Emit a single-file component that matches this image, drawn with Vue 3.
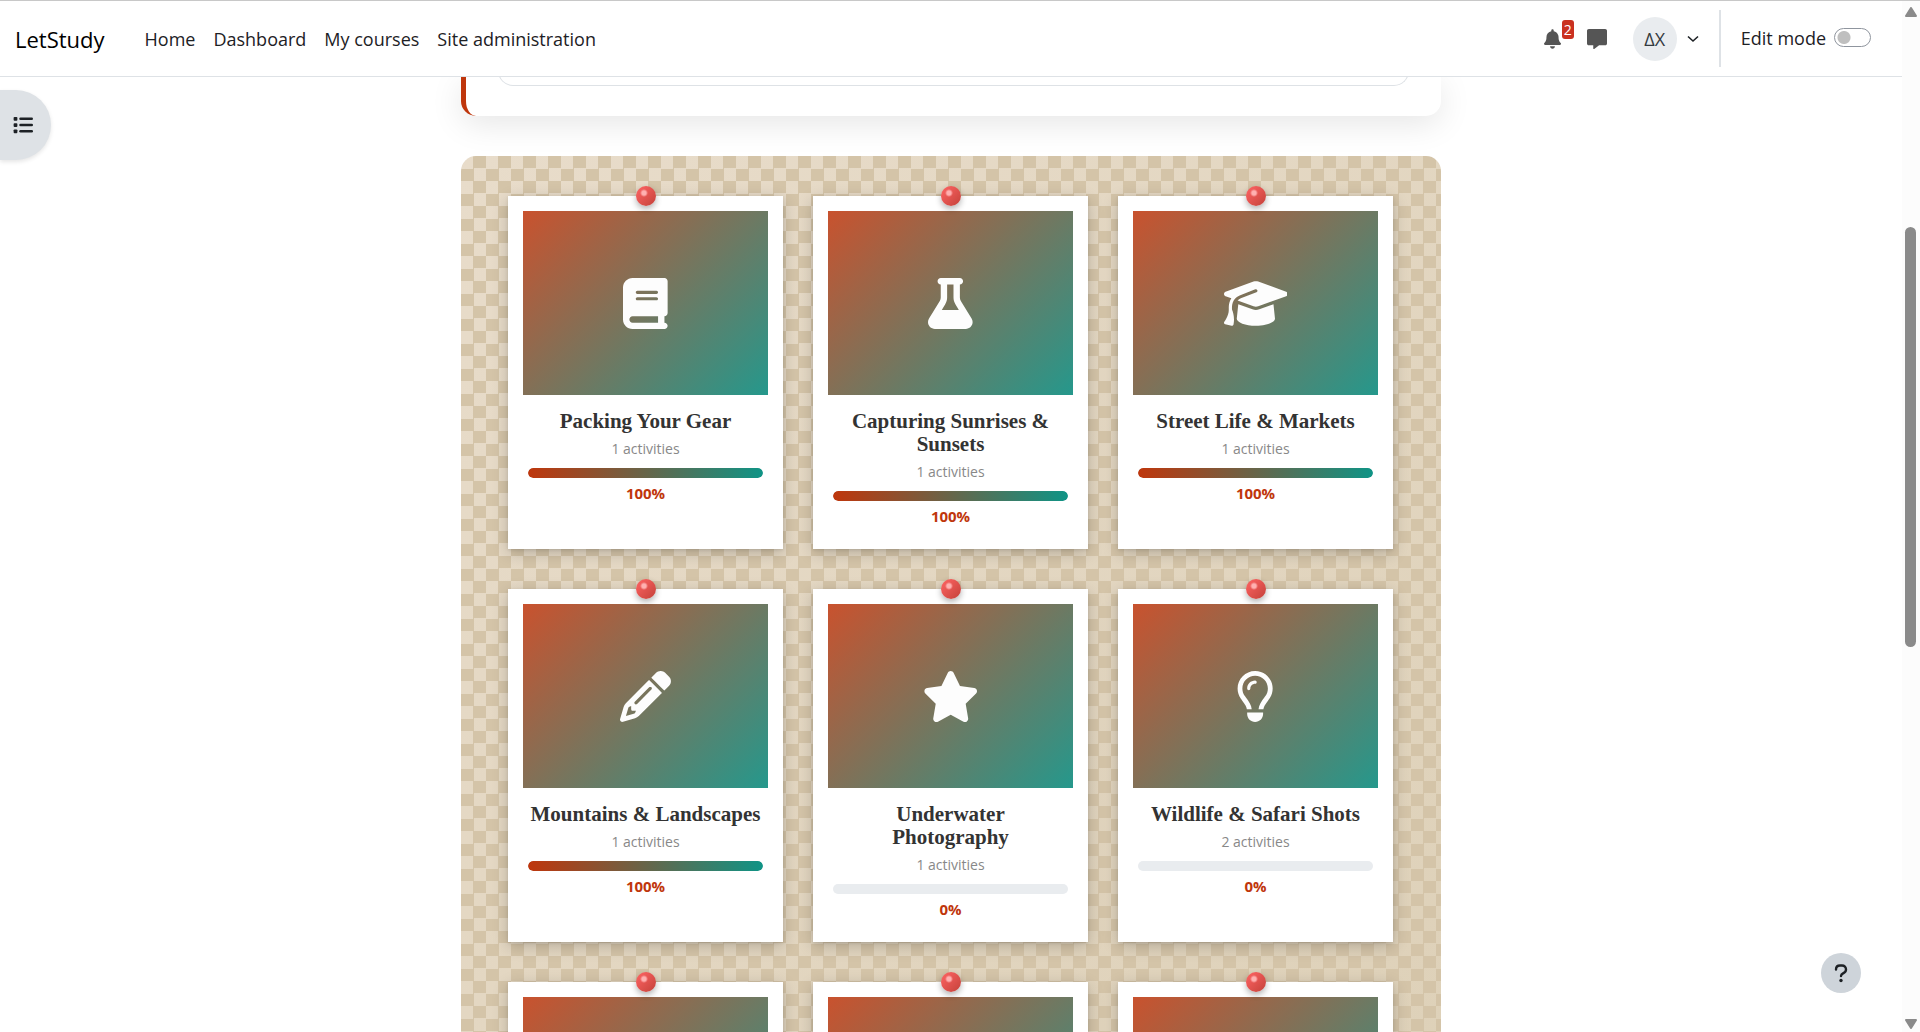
<script setup>
import { ref } from 'vue'

const editMode = ref(false)

const navLinks = ['Home', 'Dashboard', 'My courses', 'Site administration']

const icons = {
  book: {
    w: 448,
    d: 'M96 0C43 0 0 43 0 96L0 416c0 53 43 96 96 96l288 0 32 0c17.7 0 32-14.3 32-32s-14.3-32-32-32l0-64c17.7 0 32-14.3 32-32l0-320c0-17.7-14.3-32-32-32L384 0 96 0zm0 384l256 0 0 64L96 448c-17.7 0-32-14.3-32-32s14.3-32 32-32zm32-240c0-8.8 7.2-16 16-16l192 0c8.8 0 16 7.2 16 16s-7.2 16-16 16l-192 0c-8.8 0-16-7.2-16-16zm16 48l192 0c8.8 0 16 7.2 16 16s-7.2 16-16 16l-192 0c-8.8 0-16-7.2-16-16s7.2-16 16-16z',
  },
  flask: {
    w: 448,
    d: 'M288 0L160 0 128 0C110.3 0 96 14.3 96 32s14.3 32 32 32l0 132.8c0 11.8-3.3 23.5-9.5 33.5L10.3 406.2C3.6 417.2 0 429.7 0 442.6C0 480.9 31.1 512 69.4 512l309.2 0c38.3 0 69.4-31.1 69.4-69.4c0-12.8-3.6-25.4-10.3-36.4L329.5 230.4c-6.2-10.1-9.5-21.7-9.5-33.5L320 64c17.7 0 32-14.3 32-32s-14.3-32-32-32L288 0zM192 196.8L192 64l64 0 0 132.8c0 23.7 6.6 46.9 19 67.1L309.5 320l-171 0L173 263.9c12.4-20.2 19-43.4 19-67.1z',
  },
  cap: {
    w: 640,
    d: 'M320 32c-8.1 0-16.1 1.4-23.7 4.1L15.8 137.4C6.3 140.9 0 149.9 0 160s6.3 19.1 15.8 22.6l57.9 20.9C57.3 229.3 48 259.8 48 291.9l0 28.1c0 28.4-10.8 57.7-22.3 80.8c-6.5 13-13.9 25.8-22.5 37.6C0 442.7-.9 448.3 .9 453.4s6 8.9 11.2 10.2l64 16c4.2 1.1 8.7 .3 12.4-2s6.3-6.1 7.1-10.4c8.6-42.8 4.3-81.2-2.1-108.7C90.3 344.3 86 329.8 80 316.5l0-24.6c0-30.2 10.2-58.7 27.9-81.5c12.9-15.5 29.6-28 49.2-35.7l157-61.7c8.2-3.2 17.5 .8 20.7 9s-.8 17.5-9 20.7l-157 61.7c-12.4 4.9-23.3 12.4-32.2 21.6l159.6 57.6c7.6 2.7 15.6 4.1 23.7 4.1s16.1-1.4 23.7-4.1L624.2 182.6c9.5-3.4 15.8-12.5 15.8-22.6s-6.3-19.1-15.8-22.6L343.7 36.1C336.1 33.4 328.1 32 320 32zM128 408c0 35.3 86 72 192 72s192-36.7 192-72L496.7 262.6 354.5 314c-11.1 4-22.8 6-34.5 6s-23.5-2-34.5-6L143.3 262.6 128 408z',
  },
  pencil: {
    w: 512,
    d: 'M410.3 231l11.3-11.3-33.9-33.9-62.1-62.1L291.7 89.8l-11.3 11.3-22.6 22.6L58.6 322.9c-10.4 10.4-18 23.3-22.2 37.4L1 480.7c-2.5 8.4-.2 17.5 6.1 23.7s15.3 8.5 23.7 6.1l120.3-35.4c14.1-4.2 27-11.8 37.4-22.2L387.7 253.7 410.3 231zM160 399.4l-9.1 22.7c-4 3.1-8.5 5.4-13.3 6.9L59.4 452l23-78.1c1.4-4.9 3.8-9.4 6.9-13.3l22.7-9.1 0 32c0 8.8 7.2 16 16 16l32 0zM362.7 18.7L348.3 33.2 325.7 55.8 314.3 67.1l33.9 33.9 62.1 62.1 33.9 33.9 11.3-11.3 22.6-22.6 14.5-14.5c25-25 25-65.5 0-90.5L453.3 18.7c-25-25-65.5-25-90.5 0zm-47.4 168l-144 144c-6.2 6.2-16.4 6.2-22.6 0s-6.2-16.4 0-22.6l144-144c6.2-6.2 16.4-6.2 22.6 0s6.2 16.4 0 22.6z',
  },
  star: {
    w: 576,
    d: 'M316.9 18C311.6 7 300.4 0 288.1 0s-23.4 7-28.8 18L195 150.3 51.4 171.5c-12 1.8-22 10.2-25.7 21.7s-.7 24.2 7.9 32.7L137.8 329 113.2 474.7c-2 12 3 24.2 12.9 31.3s23 8 33.8 2.3l128.3-68.5 128.3 68.5c10.8 5.7 23.9 4.9 33.8-2.3s14.9-19.3 12.9-31.3L438.5 329 542.7 225.9c8.6-8.5 11.7-21.2 7.9-32.7s-13.7-19.9-25.7-21.7L381.2 150.3 316.9 18z',
  },
  bulb: {
    w: 384,
    d: 'M297.2 248.9C311.6 228.3 320 203.2 320 176c0-70.7-57.3-128-128-128S64 105.3 64 176c0 27.2 8.4 52.3 22.8 72.9c3.7 5.3 8.1 11.3 12.8 17.7c12.9 17.7 28.3 38.9 39.8 59.8c10.4 19 15.7 38.8 18.3 57.5L109 384c-2.2-12-5.9-23.7-11.8-34.5c-9.9-18-22.2-34.9-34.5-51.8c-5.2-7.1-10.4-14.2-15.4-21.4C27.6 247.9 16 213.3 16 176C16 78.8 94.8 0 192 0s176 78.8 176 176c0 37.3-11.6 71.9-31.4 100.3c-5 7.2-10.2 14.3-15.4 21.4c-12.3 16.8-24.6 33.7-34.5 51.8c-5.9 10.8-9.6 22.5-11.8 34.5l-48.6 0c2.6-18.7 7.9-38.6 18.3-57.5c11.5-20.9 26.9-42.1 39.8-59.8c4.7-6.4 9-12.4 12.7-17.7zM192 128c-26.5 0-48 21.5-48 48c0 8.8-7.2 16-16 16s-16-7.2-16-16c0-44.2 35.8-80 80-80c8.8 0 16 7.2 16 16s-7.2 16-16 16zm0 384c-44.2 0-80-35.8-80-80l0-16 160 0 0 16c0 44.2-35.8 80-80 80z',
  },
}

const cards = [
  { title: 'Packing Your Gear', count: 1, percent: 100, icon: icons.book },
  { title: 'Capturing Sunrises & Sunsets', count: 1, percent: 100, icon: icons.flask },
  { title: 'Street Life & Markets', count: 1, percent: 100, icon: icons.cap },
  { title: 'Mountains & Landscapes', count: 1, percent: 100, icon: icons.pencil },
  { title: 'Underwater\nPhotography', count: 1, percent: 0, icon: icons.star },
  { title: 'Wildlife & Safari Shots', count: 2, percent: 0, icon: icons.bulb },
  {},
  {},
  {},
]
</script>

<template>
  <div class="window">
    <div class="page">
      <header class="navbar">
        <a class="brand" href="#">LetStudy</a>
        <nav class="nav">
          <a v-for="link in navLinks" :key="link" href="#">{{ link }}</a>
        </nav>
        <div class="tools">
          <button class="icon-btn bell" type="button" aria-label="Notifications">
            <svg width="17" height="20" viewBox="0 0 448 512" fill="currentColor">
              <path d="M224 0c-17.7 0-32 14.3-32 32l0 19.2C119 66 64 130.6 64 208l0 18.8c0 47-17.3 92.4-48.5 127.6l-7.4 8.3c-8.4 9.4-10.4 22.9-5.3 34.4S19.4 416 32 416l384 0c12.6 0 24-7.4 29.2-18.9s3.1-25-5.3-34.4l-7.4-8.3C401.3 319.2 384 273.9 384 226.8l0-18.8c0-77.4-55-142-128-156.8L256 32c0-17.7-14.3-32-32-32zm45.3 493.3c12-12 18.7-28.3 18.7-45.3l-64 0-64 0c0 17 6.7 33.3 18.7 45.3s28.3 18.7 45.3 18.7s33.3-6.7 45.3-18.7z" />
            </svg>
            <span class="badge">2</span>
          </button>
          <button class="icon-btn" type="button" aria-label="Messages">
            <svg width="20" height="20" viewBox="0 0 512 512" fill="currentColor">
              <path d="M48 0C20 0 0 20 0 48L0 368c0 28 20 48 48 48l112 0 0 80c0 6.1 3.4 11.6 8.8 14.3s11.9 2.1 16.8-1.5L309.3 416 464 416c28 0 48-20 48-48l0-320c0-28-20-48-48-48L48 0z" />
            </svg>
          </button>
          <button class="user" type="button" aria-label="User menu">
            <span class="avatar">ΔX</span>
            <svg width="12" height="8" viewBox="0 0 12 8" fill="none" stroke="#1d2125" stroke-width="1.600">
              <path d="M1 1.500l5 4.500 5-4.500" />
            </svg>
          </button>
          <div class="edit">
            <label for="edit-mode">Edit mode</label>
            <input id="edit-mode" v-model="editMode" type="checkbox" />
          </div>
        </div>
      </header>

      <button class="drawer" type="button" aria-label="Open course index">
        <svg width="20" height="20" viewBox="0 0 512 512" fill="currentColor">
          <rect x="16" y="48" width="96" height="96" rx="24" />
          <rect x="16" y="208" width="96" height="96" rx="24" />
          <rect x="16" y="368" width="96" height="96" rx="24" />
          <rect x="160" y="64" width="352" height="64" rx="32" />
          <rect x="160" y="224" width="352" height="64" rx="32" />
          <rect x="160" y="384" width="352" height="64" rx="32" />
        </svg>
      </button>

      <main class="content">
        <section class="intro">
          <div class="intro-box"></div>
        </section>
        <section class="board">
          <article v-for="(card, i) in cards" :key="i" class="card">
            <span class="pin"></span>
            <div class="photo">
              <svg
                v-if="card.icon"
                :viewBox="`0 0 ${card.icon.w} 512`"
                fill="currentColor"
              >
                <path :d="card.icon.d" />
              </svg>
            </div>
            <div v-if="card.title" class="caption">
              <h3>{{ card.title }}</h3>
              <p class="count">{{ card.count }} activities</p>
              <div class="track">
                <div class="fill" :style="{ width: card.percent + '%' }"></div>
              </div>
              <p class="percent">{{ card.percent }}%</p>
            </div>
          </article>
        </section>
      </main>

      <button class="help" type="button" aria-label="Help">
        <svg width="14" height="20" viewBox="0 0 14 20" fill="none" stroke="currentColor" stroke-width="2.400" stroke-linecap="round" stroke-linejoin="round">
          <path d="M2 6.500C2 3.800 3.700 2.500 6 2.500H8C10.400 2.500 12 4.200 12 6.400C12 8.200 11 9.300 9.500 10.100C8 10.900 7 11.400 7 13" />
          <circle cx="7" cy="17.500" r="1.700" fill="currentColor" stroke="none" />
        </svg>
      </button>
    </div>

    <div class="scrollbar" aria-hidden="true">
      <svg width="12" height="10" viewBox="0 0 12 10"><path d="M6 1L11 9H1z" /></svg>
      <div class="rail"><div class="thumb"></div></div>
      <svg width="12" height="10" viewBox="0 0 12 10"><path d="M6 9L11 1H1z" /></svg>
    </div>
  </div>
</template>

<style>
body {
  margin: 0;
  overflow: hidden;
}
</style>

<style scoped>
.window {
  display: flex;
  height: 100vh;
  overflow: hidden;
  box-sizing: border-box;
  border-top: 1px solid #c8c8c8;
  background: #fff;
  color: #1d2125;
  font-family: "Segoe UI", "Open Sans", "Noto Sans", sans-serif;
  font-size: 18px;
}

.page {
  position: relative;
  flex: 1;
  min-width: 0;
  overflow: hidden;
}

button {
  padding: 0;
  border: 0;
  background: none;
  color: inherit;
  font: inherit;
  cursor: pointer;
}

svg {
  display: block;
}

.navbar {
  position: relative;
  z-index: 2;
  display: flex;
  align-items: center;
  height: 75px;
  padding: 0 31px 0 15px;
  border-bottom: 1px solid #dee2e6;
  background: #fff;
}

.brand {
  color: #000;
  font-size: 22px;
  text-decoration: none;
}

.nav {
  display: flex;
  gap: 18px;
  margin-left: 40px;
}

.nav a {
  color: #1d2125;
  text-decoration: none;
}

.tools {
  display: flex;
  align-items: center;
  margin-left: auto;
}

.icon-btn {
  position: relative;
  color: #555;
  margin-right: 26px;
}

.badge {
  position: absolute;
  top: -9px;
  left: 18px;
  width: 12px;
  border-radius: 3px;
  background: #ca3120;
  color: #fff;
  font-size: 14px;
  line-height: 19px;
  text-align: center;
}

.user {
  display: flex;
  align-items: center;
  gap: 10px;
  margin-right: 20px;
}

.avatar {
  width: 44px;
  border-radius: 50%;
  background: #e9ecef;
  color: #343a40;
  line-height: 44px;
  text-align: center;
}

.edit {
  display: flex;
  align-items: center;
  gap: 8px;
  height: 55px;
  padding: 0 0 2px 20px;
  border-left: 2px solid #dee2e6;
}

.edit input {
  width: 37px;
  height: 19px;
  margin: 0;
  appearance: none;
  border: 1px solid #8f959e;
  border-radius: 10px;
  background: radial-gradient(circle at 9px 50%, #bfbfbf 6px, transparent 7px) #fff;
}

.edit input:checked {
  background: radial-gradient(circle at 26px 50%, #fff 6px, transparent 7px) #0f6cbf;
}

.drawer {
  position: absolute;
  top: 89px;
  left: 0;
  z-index: 1;
  width: 51px;
  height: 70px;
  padding-left: 13px;
  border-radius: 0 35px 35px 0;
  background: #dee2e6;
  box-shadow: 0 2px 4px rgba(0, 0, 0, 0.1);
}

.content {
  max-width: 980px;
  margin: 0 auto;
}

.intro {
  display: flow-root;
  margin-bottom: 40px;
  padding: 0 32px 30px;
  border-left: 5px solid #bf360c;
  border-radius: 0 0 15px 15px;
  background: #fff;
  box-shadow: 0 8px 32px rgba(0, 0, 0, 0.1);
}

/* The top of the box stays scrolled away behind the navbar. */
.intro-box {
  height: 28px;
  margin-top: -20px;
  border: 1px solid #dee2e6;
  border-top: 0;
  border-radius: 0 0 15px 15px;
}

.board {
  display: grid;
  grid-template-columns: repeat(3, 1fr);
  gap: 40px 30px;
  padding: 40px 48px 40px 47px;
  border-radius: 15px;
  background:
    conic-gradient(#d4c4a8 25%, transparent 0 50%, #d4c4a8 0 75%, transparent 0) 0 0 / 25px 25px,
    linear-gradient(135deg, #e8dcca, #ddd0b7);
}

.card {
  position: relative;
  padding: 15px;
  background: #fff;
  box-shadow: 0 4px 15px rgba(0, 0, 0, 0.2), 0 1px 3px rgba(0, 0, 0, 0.1);
}

.pin {
  position: absolute;
  top: -10px;
  left: calc(50% - 10px);
  width: 20px;
  height: 20px;
  border-radius: 50%;
  background:
    radial-gradient(circle at 8px 7px, #ffb0b0 2px, transparent 4px),
    linear-gradient(135deg, #ff6464, #c4423a);
  box-shadow: 0 3px 6px rgba(0, 0, 0, 0.3);
}

.photo {
  display: flex;
  align-items: center;
  justify-content: center;
  height: 184px;
  background: linear-gradient(135deg, #c9522e, #25988c);
  color: #fdfdfd;
}

.photo svg {
  height: 51px;
}

.caption {
  padding: 15px 5px 8px;
  text-align: center;
}

h3 {
  margin: 0 0 6px;
  color: #333;
  font-family: Georgia, "Liberation Serif", serif;
  font-size: 21px;
  font-weight: 700;
  line-height: 23px;
  white-space: pre-line;
}

p {
  margin: 0;
  line-height: 20px;
}

.count {
  margin-bottom: 9px;
  color: #888;
  font-size: 14px;
}

.track {
  height: 10px;
  margin-bottom: 5px;
  overflow: hidden;
  border-radius: 5px;
  background: #e9ecef;
}

.fill {
  height: 100%;
  border-radius: 5px;
  background: linear-gradient(90deg, #bf360c, #0f9486);
}

.percent {
  color: #bf360c;
  font-size: 15px;
  font-weight: 700;
}

.help {
  position: absolute;
  right: 41px;
  bottom: 39px;
  z-index: 2;
  display: flex;
  align-items: center;
  justify-content: center;
  width: 40px;
  height: 40px;
  border-radius: 50%;
  background: #ced4da;
}

.scrollbar {
  display: flex;
  flex-direction: column;
  align-items: center;
  width: 18px;
  padding: 6px 1px 3px 0;
  box-sizing: border-box;
  background: #fcfcfc;
}

.scrollbar path {
  fill: #8a8a8a;
  stroke: #8a8a8a;
  stroke-width: 2;
  stroke-linejoin: round;
}

.rail {
  flex: 1;
  padding-top: 210px;
}

.thumb {
  width: 11px;
  height: 420px;
  border-radius: 6px;
  background: #8a8a8a;
}
</style>
